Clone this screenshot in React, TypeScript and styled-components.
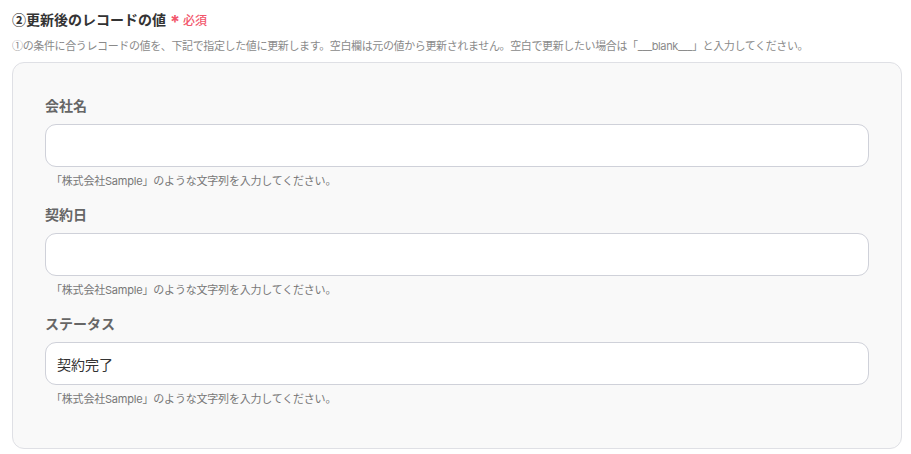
import React from "react";
import styled, { createGlobalStyle } from "styled-components";

const GlobalStyle = createGlobalStyle`
  body {
    margin: 0;
    background: #fff;
    font-family: "Inter", "Noto Sans CJK JP", sans-serif;
  }
`;

const fields = [
  { label: "会社名", value: "" },
  { label: "契約日", value: "" },
  { label: "ステータス", value: "契約完了" },
];

const hint = "「株式会社Sample」のような文字列を入力してください。";

export default function App() {
  return (
    <>
      <GlobalStyle />
      <Page>
        <Title>
          <Num>②</Num>更新後のレコードの値
          <Required>
            <Asterisk>*</Asterisk>必須
          </Required>
        </Title>
        <Description>
          <Num>①</Num>の条件に合うレコードの値を、下記で指定した値に更新します。空白欄は元の値から更新されません。空白で更新したい場合は「___blank___」と入力してください。
        </Description>
        <Panel>
          {fields.map((f, i) => (
            <Field key={i}>
              <Label>{f.label}</Label>
              <Input defaultValue={f.value} />
              <Hint>{hint}</Hint>
            </Field>
          ))}
        </Panel>
      </Page>
    </>
  );
}

const Page = styled.div`
  padding: 8px 9px 6px 12px;
`;

const Num = styled.span`
  font-family: "Noto Sans CJK JP", sans-serif;
`;

const Title = styled.div`
  display: flex;
  align-items: center;
  height: 22px;
  font-size: 14px;
  font-weight: 700;
  color: #333;
`;

const Required = styled.span`
  display: inline-flex;
  align-items: center;
  margin-left: 4px;
  font-size: 12px;
  font-weight: 500;
  color: #f2566b;
`;

const Asterisk = styled.span`
  font-size: 18px;
  font-weight: 700;
  line-height: 1;
  margin-top: 6px;
  margin-right: 3px;
`;

const Description = styled.div`
  margin-top: 7px;
  font-size: 11px;
  line-height: 16px;
  letter-spacing: -0.37px;
  color: #8a8a8a;
  white-space: nowrap;
`;

const Panel = styled.div`
  margin-top: 8px;
  width: 890px;
  box-sizing: border-box;
  padding: 33px 32px 41px 32px;
  background: #f9f9f9;
  border: 1px solid #dfe0e5;
  border-radius: 12px;
  display: flex;
  flex-direction: column;
  gap: 16px;
`;

const Field = styled.div`
  display: flex;
  flex-direction: column;
`;

const Label = styled.div`
  font-size: 14px;
  line-height: 20px;
  font-weight: 700;
  color: #666;
`;

const Input = styled.input`
  margin-top: 8px;
  height: 43px;
  box-sizing: border-box;
  padding: 0 11px;
  border: 1px solid #cfd1d9;
  border-radius: 11px;
  background: #fff;
  font-family: "Inter", "Noto Sans CJK JP", sans-serif;
  font-size: 14px;
  color: #333;
  outline: none;
`;

const Hint = styled.div`
  margin-top: 6px;
  padding-left: 6px;
  font-size: 11px;
  line-height: 16px;
  letter-spacing: -0.2px;
  color: #777;
`;
